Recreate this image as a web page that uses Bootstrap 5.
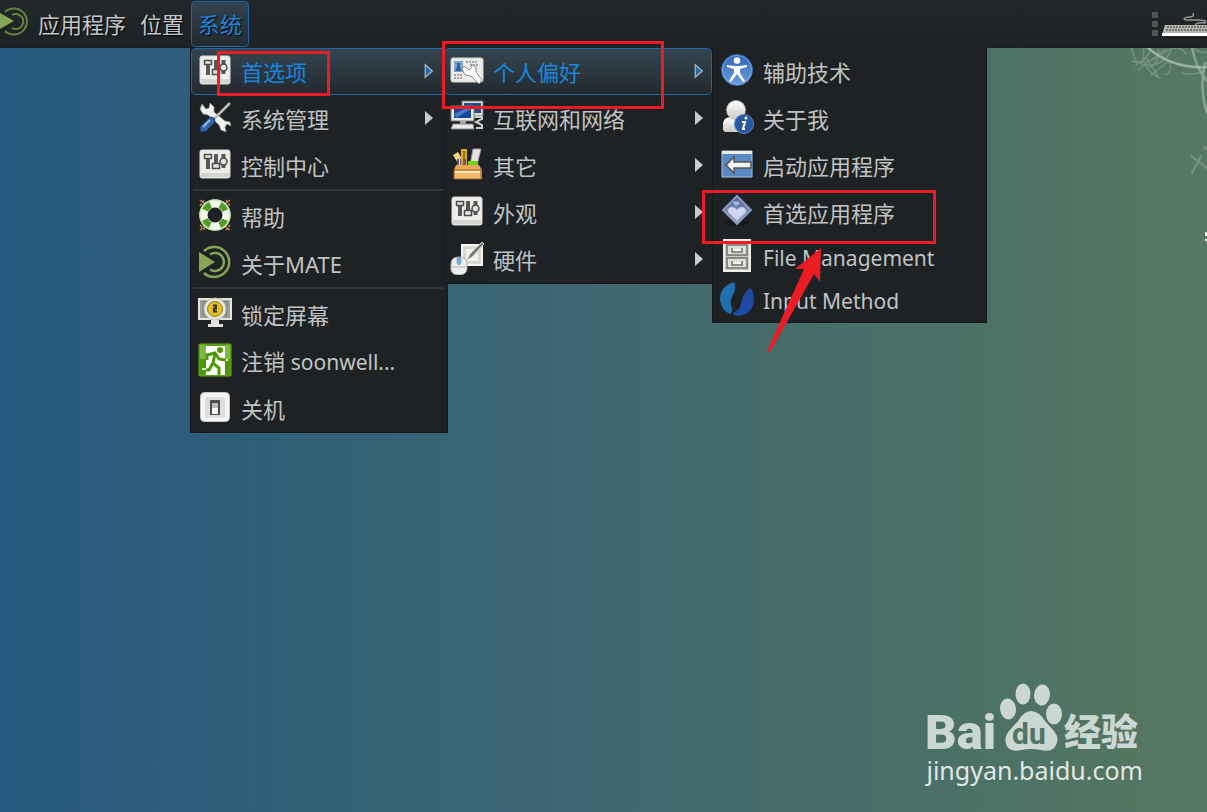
<!DOCTYPE html>
<html lang="zh-CN">
<head>
<meta charset="utf-8">
<meta name="viewport" content="width=device-width, initial-scale=1">
<title>MATE 桌面</title>
<link rel="stylesheet" href="https://cdn.jsdelivr.net/npm/bootstrap@5.3.0/dist/css/bootstrap.min.css">
<style>
body{font-family:"Noto Sans","Noto Sans CJK SC",sans-serif;background:#27587e}
.desktop{background:linear-gradient(90deg,#26587f 0%,#2d5e7b 16%,#356375 32%,#3d6673 45%,#446b6c 60%,#4c7166 82%,#577860 100%)}
.panel{height:48px;background:linear-gradient(#22272a,#1e2224);border-bottom:1px solid #1a1e20;z-index:2}
.panel-btn{font-size:22px;line-height:44px;color:#c4c6c7;text-shadow:1px 1px 1px #000;border:1px solid transparent;border-radius:4px;padding:0 6px;background:none}
.panel-btn.active{color:#1b86dd;border-color:#1c68a8;background:linear-gradient(#33434e,#232a2f)}
.cascade{top:47px;left:190px;z-index:2}
.menu-pane{background:#1e2224;border:1px solid #171a1c;border-top:0;padding-top:1px}
.pane-a{width:258px}
.pane-b{width:270px;margin-left:-5px}
.pane-c{width:275px;margin-left:-1px}
.menu-row{font-size:22px;line-height:30px;height:47px;color:#c0c2c3;padding:0 12px 0 6px;border:1px solid transparent;border-radius:5px;gap:9px}
.pane-b .menu-row{padding:0 7px 0 5px}
.menu-row svg.ico{width:34px;height:34px;margin-top:-3px;flex:none}
.latin{font-size:21px}
.menu-row.short{height:43px}
.menu-row:hover{background:none;color:#c0c2c3}
.menu-row.active{background:linear-gradient(#344550,#232a2f);color:#1b86dd;border-color:#1c68a8}
.caret{width:10px;height:18px;margin-top:-2px}
.rule{height:4px;border-top:2px solid #33373a;margin:0 4px 0 2px}
.notes{left:0;top:0;pointer-events:none;z-index:3}
.swirl{right:0;top:47px}
.watermark{padding:0 64px 24px 0;color:#cbd7d2}
.site{font-size:25px;line-height:36px;color:#e0e7e4}
</style>
</head>
<body>
<svg width="0" height="0" class="position-absolute" aria-hidden="true">
<defs>
<linearGradient id="blue" x1="0" y1="0" x2="0" y2="1"><stop offset="0" stop-color="#2e63b0"/><stop offset="1" stop-color="#6f9fe0"/></linearGradient>
<linearGradient id="pale" x1="0" y1="0" x2="0" y2="1"><stop offset="0" stop-color="#fff"/><stop offset="1" stop-color="#c9cac4"/></linearGradient>
<linearGradient id="gem" x1="0" y1="0" x2="0" y2="1"><stop offset="0" stop-color="#46628d"/><stop offset="1" stop-color="#a9b3dc"/></linearGradient>
<symbol id="i-sliders" viewBox="0 0 34 34"><rect x="2" y="3" width="30" height="28" rx="2" fill="#eeeeec" stroke="#d8d8d5"/><path d="M3 26h28v4H3z" fill="#d4d4d0"/><path d="M10 8v14M18 7v10M25.500 7v14" stroke="#555853" stroke-width="4"/><g fill="#e4e5e2" stroke="#484b47" stroke-width="1.500"><path d="M6.500 7.500h7v4h-7zM14.500 16.500h7v5h-7z"/><circle cx="25.500" cy="14.500" r="3.500"/></g></symbol>
<symbol id="i-tools" viewBox="0 0 34 34"><path d="M4 4l4 5 3-1 1-5 4 4v5l11 9 5 1 1 4-4-2-2 3 1 5-5-2-2-5L10 15 5 14 2 9z" fill="#f2f2ee" stroke="#8b8d88" stroke-width=".7"/><path d="M32 3 16 19" stroke="#bcbdb5" stroke-width="2.500"/><path d="M16 18 12 17 2 27l1 5 5-1 9-9z" fill="#3465a4" stroke="#1b3b76"/><path d="M5 27 12 20" stroke="#8fb6e5" stroke-width="2"/></symbol>
<symbol id="i-help" viewBox="0 0 34 34"><path d="M2 2l8 6M32 2l-8 6M2 32l8-6M32 32l-8-6M2 8l4-6M28 2l4 6M2 27l5 5M28 32l4-5" fill="none" stroke="#b98849" stroke-width="1.500" stroke-dasharray="3 1"/><circle cx="17" cy="17" r="11.500" fill="none" stroke="#f2f7ec" stroke-width="8"/><circle cx="17" cy="17" r="11.500" fill="none" stroke="#559b24" stroke-width="7" stroke-dasharray="8 10.060" stroke-dashoffset="-5"/><circle cx="17" cy="17" r="15" fill="none" stroke="#cfe6b9" stroke-width="1.500"/></symbol>
<symbol id="i-mate" viewBox="0 0 34 34"><path d="M1 7v20l16-10z" fill="#87a556"/><g fill="none" stroke="#87a556" stroke-width="2.500"><path d="M6 6A15 15 0 1 1 6 28"/><path d="M12 9.500a9 9 0 1 1 0 15"/></g></symbol>
<symbol id="i-lock" viewBox="0 0 34 34"><path d="M1 3h32v20H1z" fill="#9da19a" stroke="#e5e5df" stroke-width="2"/><path d="M4 5h26v16H4z" fill="#8b8f88"/><path d="M13 22h8v6h4v3H10v-3h3z" fill="#e4e4df"/><circle cx="17" cy="13" r="11" fill="#e7e7df" stroke="#bcbeb7"/><circle cx="17" cy="13" r="7.500" fill="#e0bd29" stroke="#988015"/><path d="M15 9.500h3v3h-2v3h3" fill="none" stroke="#332b0b" stroke-width="2"/></symbol>
<symbol id="i-exit" viewBox="0 0 34 34"><rect x="1" y="1" width="32" height="32" rx="1" fill="#4e9a06" stroke="#65aa27"/><path d="M8 3h19v29H8z" fill="#fff"/><path d="M2 2h6v14H2zM27 2h5v14h-5z" fill="#7dbb42"/><circle cx="22" cy="7" r="3" fill="#4e9a06"/><path d="M9 17v-5l8-2 4 6 6 1M17 11l-2 9 6 5v7M15 20l-4 7H5" fill="none" stroke="#4e9a06" stroke-width="3"/><path d="M4 26h4M28 17h2" fill="none" stroke="#e8f5dc" stroke-width="2"/></symbol>
<symbol id="i-power" viewBox="0 0 34 34"><rect x="2.500" y="2.500" width="29" height="29" rx="4" fill="#f5f5f5" stroke="#c5c5c5"/><rect x="7" y="7" width="20" height="21" rx="2" fill="#dedede"/><path d="M12 10h10v15H12z" fill="#4d4d4d"/><path d="M14 13h6v11h-6z" fill="#bbb"/><path d="M14 18h6v6h-6z" fill="#f8f8f8"/></symbol>
<symbol id="i-personal" viewBox="0 0 34 34"><rect x="1" y="5" width="32" height="24" rx="2" fill="#ececea" stroke="#d4d4d1"/><path d="M4 8h9v11H4z" fill="#7ca7d1"/><path d="M7 10h3v4l2 4H5l2-4z" fill="#36628f"/><path d="M16 9h12M4 22h8M4 25h8M20 12h9" stroke="#8a8b88" stroke-width="1.500" stroke-dasharray="2 1"/><path d="M14 13l5 4 3-3-1-3 5 3v5l6 8-3 4-8-8-6-1-3-6z" fill="#fafafa" stroke="#8c8e89"/></symbol>
<symbol id="i-net" viewBox="0 0 34 34"><path d="M12 1h21v15H12z" fill="#dbddd6" stroke="#6e716b"/><path d="M14 3h17v10H14z" fill="#244b88"/><path d="M18 17h14v2l-6 3 6 3v3h-6" fill="none" stroke="#cdcec9" stroke-width="2"/><path d="M1 6h23v15H1z" fill="#e9e9e4" stroke="#777a74"/><path d="M4 9h17v9H4z" fill="#16439b"/><path d="M4 14l10-5h7L6 18z" fill="#4878c0"/><path d="M10 21h6v3h-6z" fill="#aaa"/><path d="M3 24h20l1 5H1z" fill="#e9e9e4" stroke="#888"/></symbol>
<symbol id="i-other" viewBox="0 0 34 34"><path d="M11 2h6v16h-6z" fill="#d7a927"/><path d="M13 4h2v12h-2z" fill="#9c7510"/><path d="M3 8l5-3 3 5-2 8z" fill="#efd77a"/><path d="M23 2h8l-4 16h-7z" fill="#e2e2df" stroke="#999"/><path d="M7 12h4v8H7zM13 12h3v8h-3z" fill="#74507b"/><path d="M9 12h1v8H9z" fill="#fff"/><path d="M18 14h10v5H18z" fill="#73d216"/><path d="M6 18h23l3 5v9H4v-9z" fill="#e9a85a"/><path d="M4 23h27v9H4z" fill="#f2b96c" stroke="#9d6524"/><path d="M5 25h25" stroke="#ffe2af" stroke-width="2"/></symbol>
<symbol id="i-hardware" viewBox="0 0 34 34"><path d="M12 4h20v20H12z" fill="#d7d7d1" stroke="#f6f6f2" stroke-width="2"/><path d="M16 8h12v12H16z" fill="#f2f2ef"/><path d="M17 19l3-6L32 1l2 2-12 13z" fill="#777a74" stroke="#d0d1cb"/><path d="M1 23q0-7 8-7t8 7v5q-1 6-8 6t-8-5z" fill="#eeeeea" stroke="#aaa"/><path d="M2 26h14" stroke="#bbb"/><ellipse cx="9" cy="20" rx="2.500" ry="4" fill="#7aa5dd"/></symbol>
<symbol id="i-access" viewBox="0 0 34 34"><circle cx="17" cy="17" r="15.500" fill="url(#blue)" stroke="#386eb5"/><circle cx="17" cy="17" r="14.500" fill="none" stroke="#8db3e4" stroke-width=".7"/><circle cx="17" cy="7.500" r="3.300" fill="#fff"/><path d="M7 12l7 1h6l7-1v2l-7 2v4l5 8-2 1-6-8-6 8-2-1 5-8v-4l-7-2z" fill="#fff"/></symbol>
<symbol id="i-me" viewBox="0 0 34 34"><path d="M3 30V23q1-6 8-6h8q7 1 7 8v7H5z" fill="url(#pale)"/><circle cx="16" cy="10" r="9.500" fill="url(#pale)" stroke="#bbbcb6" stroke-width=".7"/><circle cx="24" cy="24" r="9.500" fill="#2857a1" stroke="#5a87c6"/><circle cx="26" cy="18" r="1.500" fill="#fff"/><path d="M22 22h3l-2 7h2" fill="none" stroke="#fff" stroke-width="2"/></symbol>
<symbol id="i-start" viewBox="0 0 34 34"><path d="M2 4h30v26H2z" fill="#5a88c2" stroke="#a4c4e8"/><path d="M2 4h30v3H2z" fill="#eceddf"/><path d="M6 18l8-8v5h17v6H14v5z" fill="#f4f4f4" stroke="#555" stroke-width="1.500"/></symbol>
<symbol id="i-apps" viewBox="0 0 34 34"><ellipse cx="17" cy="29" rx="12" ry="3" fill="#15181a"/><path d="M17 2l14 14-14 14L3 16z" fill="url(#gem)" stroke="#8796ba" stroke-width="2"/><path d="M17 26l-9-8q0-5 4-5 3 0 5 3 2-3 5-3 4 1 4 5z" fill="#d2d6ed"/><path d="M16 12l-3-3q0-2 2-2l1 1 2-1q2 1 1 3z" fill="#a9bad6"/></symbol>
<symbol id="i-files" viewBox="0 0 34 34"><path d="M4 1h26v31H4z" fill="#c9cac2" stroke="#efefea" stroke-width="2"/><g fill="#dedfd8" stroke="#71746d" stroke-width="1.500"><path d="M7 6h20v10H7zM7 19h20v10H7z"/><path d="M12 9v4h10V9M12 22v4h10v-4" fill="none"/></g><path d="M13 11h8M13 24h8" stroke="#f5f5f2" stroke-width="2"/></symbol>
<symbol id="i-input" viewBox="0 0 34 34"><path d="M14 0Q0 4 0 18q1 10 10 14 3-2 2-6-3-7 1-13 4-7 1-13z" fill="#2070b0"/><path d="M30 6q4 3 4 11-1 15-15 17-7 0-6-3 4-2 7-6 2-13 10-19z" fill="#1e4aa5"/></symbol>
<symbol id="c-arrow" viewBox="0 0 10 18"><path d="M1 2 9 9 1 16z" fill="#c9cbcc"/></symbol>
<symbol id="c-active" viewBox="0 0 12 18"><path d="M1.500 1.500 10 9l-8.500 7.500z" fill="#1c69ad" stroke="#a9b6bf" stroke-width="1.500"/></symbol>
</defs>
</svg>

<div class="desktop position-relative min-vh-100 d-flex flex-column overflow-hidden">
  <nav class="panel position-relative d-flex align-items-center" aria-label="面板">
    <svg width="31" height="34" viewBox="0 0 31 34" class="flex-shrink-0" aria-hidden="true"><path d="M0 6v16l14-8z" fill="#87a556"/><g fill="none" stroke="#69843f" stroke-width="2"><path d="M5 5A13 13 0 1 1 5 24"/><path d="M12 8a7.500 7.500 0 1 1 0 13"/></g></svg>
    <button type="button" class="panel-btn">应用程序</button>
    <button type="button" class="panel-btn">位置</button>
    <button type="button" class="panel-btn active" aria-expanded="true">系统</button>
    <svg class="ms-auto flex-shrink-0" width="57" height="34" viewBox="0 0 57 34" aria-hidden="true"><path d="M2 5h6v6H2zM2 14h6v6H2zM2 23h6v6H2z" fill="#515456"/><path d="M43 6q2 4-4 4-8 1-3 3h12q9 0 7 3-6-1-9 1v2" fill="none" stroke="#949692" stroke-width="1.500"/><path d="M15 18h42v10H12z" fill="#b5b6b1"/><path d="M12 26h45v3H12z" fill="#fff"/><path d="M17 20h40M16 23h41" stroke="#5e605c" stroke-width="1.500" stroke-dasharray="2 1"/></svg>
  </nav>

  <svg class="swirl position-absolute" width="107" height="200" viewBox="0 0 107 200" aria-hidden="true"><g fill="none" stroke="#a9c0ae" stroke-linecap="round"><path d="M47 0q25 22 60 20" stroke-width="2.500" opacity=".8"/><path d="M92 0q4 22 15 34M105 16q-6 25 2 50" stroke-width="2.500" opacity=".6"/><path d="M32 0q1 23 25 17 12-5 15-17M44 0q-4 22 16 31M32 14q14 5 30-7t24 0M38 23 66 2M51 28l18-14q4 10-3 14M46 10l12 19M58 2q2 14-8 18M36 18q16-10 14-18M104 24q-12 5-22 2M94 0q5 7 13 5" stroke-width="1.500" opacity=".38"/><path d="M91 109l16 12M101 109l-9 17M104 100l3 3" stroke-width="2" opacity=".4"/></g><path d="M105 185h2v4h-2zM105 192h2v2h-2z" fill="#eef2ef"/></svg>

  <div class="cascade position-absolute d-flex align-items-start">
    <div class="menu-pane pane-a" role="menu" aria-label="系统">
      <button type="button" role="menuitem" class="menu-row dropdown-item d-flex align-items-center active"><svg class="ico"><use href="#i-sliders"/></svg><span>首选项</span><svg class="caret ms-auto"><use href="#c-active"/></svg></button>
      <button type="button" role="menuitem" class="menu-row dropdown-item d-flex align-items-center"><svg class="ico"><use href="#i-tools"/></svg><span>系统管理</span><svg class="caret ms-auto"><use href="#c-arrow"/></svg></button>
      <button type="button" role="menuitem" class="menu-row dropdown-item d-flex align-items-center"><svg class="ico"><use href="#i-sliders"/></svg><span>控制中心</span></button>
      <div class="rule" role="separator"></div>
      <button type="button" role="menuitem" class="menu-row dropdown-item d-flex align-items-center"><svg class="ico"><use href="#i-help"/></svg><span>帮助</span></button>
      <button type="button" role="menuitem" class="menu-row dropdown-item d-flex align-items-center"><svg class="ico"><use href="#i-mate"/></svg><span>关于MATE</span></button>
      <div class="rule" role="separator"></div>
      <button type="button" role="menuitem" class="menu-row dropdown-item d-flex align-items-center"><svg class="ico"><use href="#i-lock"/></svg><span>锁定屏幕</span></button>
      <button type="button" role="menuitem" class="menu-row dropdown-item d-flex align-items-center"><svg class="ico"><use href="#i-exit"/></svg><span>注销 <span class="latin">soonwell...</span></span></button>
      <button type="button" role="menuitem" class="menu-row dropdown-item d-flex align-items-center"><svg class="ico"><use href="#i-power"/></svg><span>关机</span></button>
    </div>
    <div class="menu-pane pane-b" role="menu" aria-label="首选项">
      <button type="button" role="menuitem" class="menu-row dropdown-item d-flex align-items-center active"><svg class="ico"><use href="#i-personal"/></svg><span>个人偏好</span><svg class="caret ms-auto"><use href="#c-active"/></svg></button>
      <button type="button" role="menuitem" class="menu-row dropdown-item d-flex align-items-center"><svg class="ico"><use href="#i-net"/></svg><span>互联网和网络</span><svg class="caret ms-auto"><use href="#c-arrow"/></svg></button>
      <button type="button" role="menuitem" class="menu-row dropdown-item d-flex align-items-center"><svg class="ico"><use href="#i-other"/></svg><span>其它</span><svg class="caret ms-auto"><use href="#c-arrow"/></svg></button>
      <button type="button" role="menuitem" class="menu-row dropdown-item d-flex align-items-center"><svg class="ico"><use href="#i-sliders"/></svg><span>外观</span><svg class="caret ms-auto"><use href="#c-arrow"/></svg></button>
      <button type="button" role="menuitem" class="menu-row dropdown-item d-flex align-items-center"><svg class="ico"><use href="#i-hardware"/></svg><span>硬件</span><svg class="caret ms-auto"><use href="#c-arrow"/></svg></button>
    </div>
    <div class="menu-pane pane-c" role="menu" aria-label="个人偏好">
      <button type="button" role="menuitem" class="menu-row dropdown-item d-flex align-items-center"><svg class="ico"><use href="#i-access"/></svg><span>辅助技术</span></button>
      <button type="button" role="menuitem" class="menu-row dropdown-item d-flex align-items-center"><svg class="ico"><use href="#i-me"/></svg><span>关于我</span></button>
      <button type="button" role="menuitem" class="menu-row dropdown-item d-flex align-items-center"><svg class="ico"><use href="#i-start"/></svg><span>启动应用程序</span></button>
      <button type="button" role="menuitem" class="menu-row dropdown-item d-flex align-items-center"><svg class="ico"><use href="#i-apps"/></svg><span>首选应用程序</span></button>
      <button type="button" role="menuitem" class="menu-row short dropdown-item d-flex align-items-center"><svg class="ico"><use href="#i-files"/></svg><span class="latin">File Management</span></button>
      <button type="button" role="menuitem" class="menu-row short dropdown-item d-flex align-items-center"><svg class="ico"><use href="#i-input"/></svg><span class="latin">Input Method</span></button>
    </div>
  </div>

  <svg class="notes position-absolute" width="940" height="356" viewBox="0 0 940 356" aria-hidden="true"><g fill="none" stroke="#ec1c24" stroke-width="3"><path d="M218.500 52.500h110v42h-110zM443.500 42.500h219v65h-219zM703.500 191.500h231v51h-231z"/></g><path d="M821 248l-26 21 9 0-37 82 3 1 44-78 6 8z" fill="#ec1c24"/></svg>

  <div class="watermark mt-auto ms-auto d-flex flex-column">
    <svg class="overflow-visible" width="215" height="69" viewBox="0 0 215 69" role="img" aria-label="Baidu 经验"><g fill="#cbd7d2"><text x="-1" y="66" font-family="Roboto,sans-serif" font-weight="900" font-size="49">Bai</text><ellipse cx="82" cy="26" rx="8" ry="10.500" transform="rotate(-8 82 26)"/><ellipse cx="97" cy="11" rx="7.500" ry="10.500"/><ellipse cx="116" cy="12" rx="8" ry="10.500" transform="rotate(8 116 12)"/><ellipse cx="128" cy="31" rx="8" ry="10.500"/><path d="M105 28q8 0 14 10l9 10q6 7 2 14-4 8-15 5-10-2-20 0-12 3-15-6-2-7 3-13l9-10q6-10 13-10z"/><text x="138" y="63" font-family="'Noto Sans CJK SC',sans-serif" font-weight="900" font-size="37">经验</text></g><text x="86" y="61" font-family="Roboto,sans-serif" font-weight="700" font-size="30" fill="#507466">du</text></svg>
    <span class="site">jingyan.baidu.com</span>
  </div>
</div>
<script src="https://cdn.jsdelivr.net/npm/bootstrap@5.3.0/dist/js/bootstrap.bundle.min.js"></script>
</body>
</html>
